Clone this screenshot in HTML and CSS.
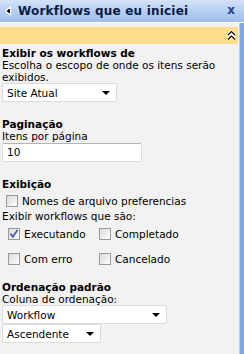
FILE: index.html
```html
<!DOCTYPE html>
<html lang="pt">
<head>
  <meta charset="UTF-8">
  <title>Workflows que eu iniciei</title>
  <link rel="stylesheet" href="styles.css">
</head>
<body>
  <div class="panel">
    <div class="title-bar">
      <svg class="back-icon" width="8" height="10" viewBox="0 0 8 10">
        <path d="M6.5 1 L1.5 5 L6.5 9 Z" fill="#000" stroke="#fff" stroke-width="1.2" stroke-linejoin="round"/>
      </svg>
      <span class="title">Workflows que eu iniciei</span>
      <span class="close">x</span>
    </div>

    <div class="content">
      <div class="toolbar">
        <svg width="9" height="11" viewBox="0 0 9 11">
          <path d="M1 5 L4.5 1.5 L8 5 M1 9.5 L4.5 6 L8 9.5" fill="none" stroke="#fff" stroke-width="3"/>
          <path d="M1 5 L4.5 1.5 L8 5 M1 9.5 L4.5 6 L8 9.5" fill="none" stroke="#000" stroke-width="1.2"/>
        </svg>
      </div>

      <div class="section first">
        <div class="label">Exibir os workflows de</div>
        <div>Escolha o escopo de onde os itens serão exibidos.</div>
        <div class="select w-site"><span>Site Atual</span><i class="arrow"></i></div>
      </div>

      <div class="section">
        <div class="label">Paginação</div>
        <div>Itens por página</div>
        <div class="textbox">10</div>
      </div>

      <div class="section">
        <div class="label">Exibição</div>
        <div class="check-line"><span class="chk"></span>Nomes de arquivo preferencias</div>
        <div class="sub">Exibir workflows que são:</div>
        <div class="check-grid">
          <div class="check-item"><span class="chk">
            <svg width="10" height="10" viewBox="0 0 10 10"><path d="M1.5 4.5 L3.8 7.8 L8.5 1" fill="none" stroke="#3a55b8" stroke-width="1.6"/></svg>
          </span>Executando</div>
          <div class="check-item"><span class="chk"></span>Completado</div>
          <div class="check-item"><span class="chk"></span>Com erro</div>
          <div class="check-item"><span class="chk"></span>Cancelado</div>
        </div>
      </div>

      <div class="section">
        <div class="label">Ordenação padrão</div>
        <div>Coluna de ordenação:</div>
        <div class="select w-col"><span>Workflow</span><i class="arrow"></i></div>
        <div class="select w-order"><span>Ascendente</span><i class="arrow"></i></div>
      </div>
    </div>
  </div>
</body>
</html>
```

FILE: styles.css
```css
html, body {
  margin: 0;
  padding: 0;
}
body {
  font-family: 'DejaVu Sans', Verdana, sans-serif;
  font-size: 10.5px;
  line-height: 12px;
  color: #000;
  background: #f2f2f2;
}
.panel {
  width: 244px;
  height: 354px;
  display: flex;
  flex-direction: column;
  overflow: hidden;
}
.title-bar {
  height: 22px;
  display: flex;
  align-items: center;
  background: linear-gradient(to bottom, #d3e3f8 0%, #b3cdf1 55%, #9dbeec 100%);
  border-bottom: 1px solid #fff;
  flex-shrink: 0;
}
.back-icon {
  margin: 0 6px 0 4px;
}
.title {
  font-weight: bold;
  font-size: 12px;
  color: #0d1b45;
  flex: 1;
  letter-spacing: 0.2px;
}
.close {
  font-weight: bold;
  font-size: 12px;
  color: #263f94;
  margin-right: 9px;
  margin-top: -2px;
}
.content {
  flex: 1;
  padding: 4px 2px 0 0;
  border-right: 4px solid #7fa8e6;
  box-shadow: inset -1px 0 0 #b6cff3;
}
.toolbar {
  height: 17px;
  background: #fedd8a;
  display: flex;
  justify-content: flex-end;
  align-items: center;
  padding-right: 2px;
}
.section {
  padding-left: 2px;
  margin-bottom: 16px;
}
.section.first {
  margin-top: 3px;
}
.label {
  font-weight: bold;
}
.select {
  display: flex;
  align-items: center;
  justify-content: space-between;
  height: 17px;
  background: #fff;
  border: 1px solid #dcdcdc;
  border-radius: 2px;
  padding: 0 6px 0 4px;
}
.w-site { width: 103px; }
.w-col { width: 153px; }
.w-order { width: 87px; }
.arrow {
  width: 0;
  height: 0;
  border-left: 4px solid transparent;
  border-right: 4px solid transparent;
  border-top: 4px solid #000;
}
.textbox {
  width: 134px;
  height: 17px;
  line-height: 17px;
  margin-top: 1px;
  background: #fff;
  border: 1px solid #dcdcdc;
  border-top-color: #b4b4b4;
  border-radius: 2px;
  padding-left: 4px;
}
.chk {
  width: 10px;
  height: 10px;
  border: 1px solid #9a9a9a;
  background: linear-gradient(135deg, #d9d9d9 0%, #f4f4f4 70%, #fff 100%);
  display: inline-flex;
  align-items: center;
  justify-content: center;
  margin-right: 4px;
  flex-shrink: 0;
}
.check-line {
  display: flex;
  align-items: center;
  height: 16px;
  padding-left: 4px;
  margin-top: 3px;
}
.sub {
  margin-top: 1px;
}
.check-grid {
  display: grid;
  grid-template-columns: 91px auto;
  grid-auto-rows: 13px;
  row-gap: 12px;
  padding-left: 6px;
  margin-top: 5px;
  margin-bottom: 5px;
}
.check-item {
  display: flex;
  align-items: center;
}
```
